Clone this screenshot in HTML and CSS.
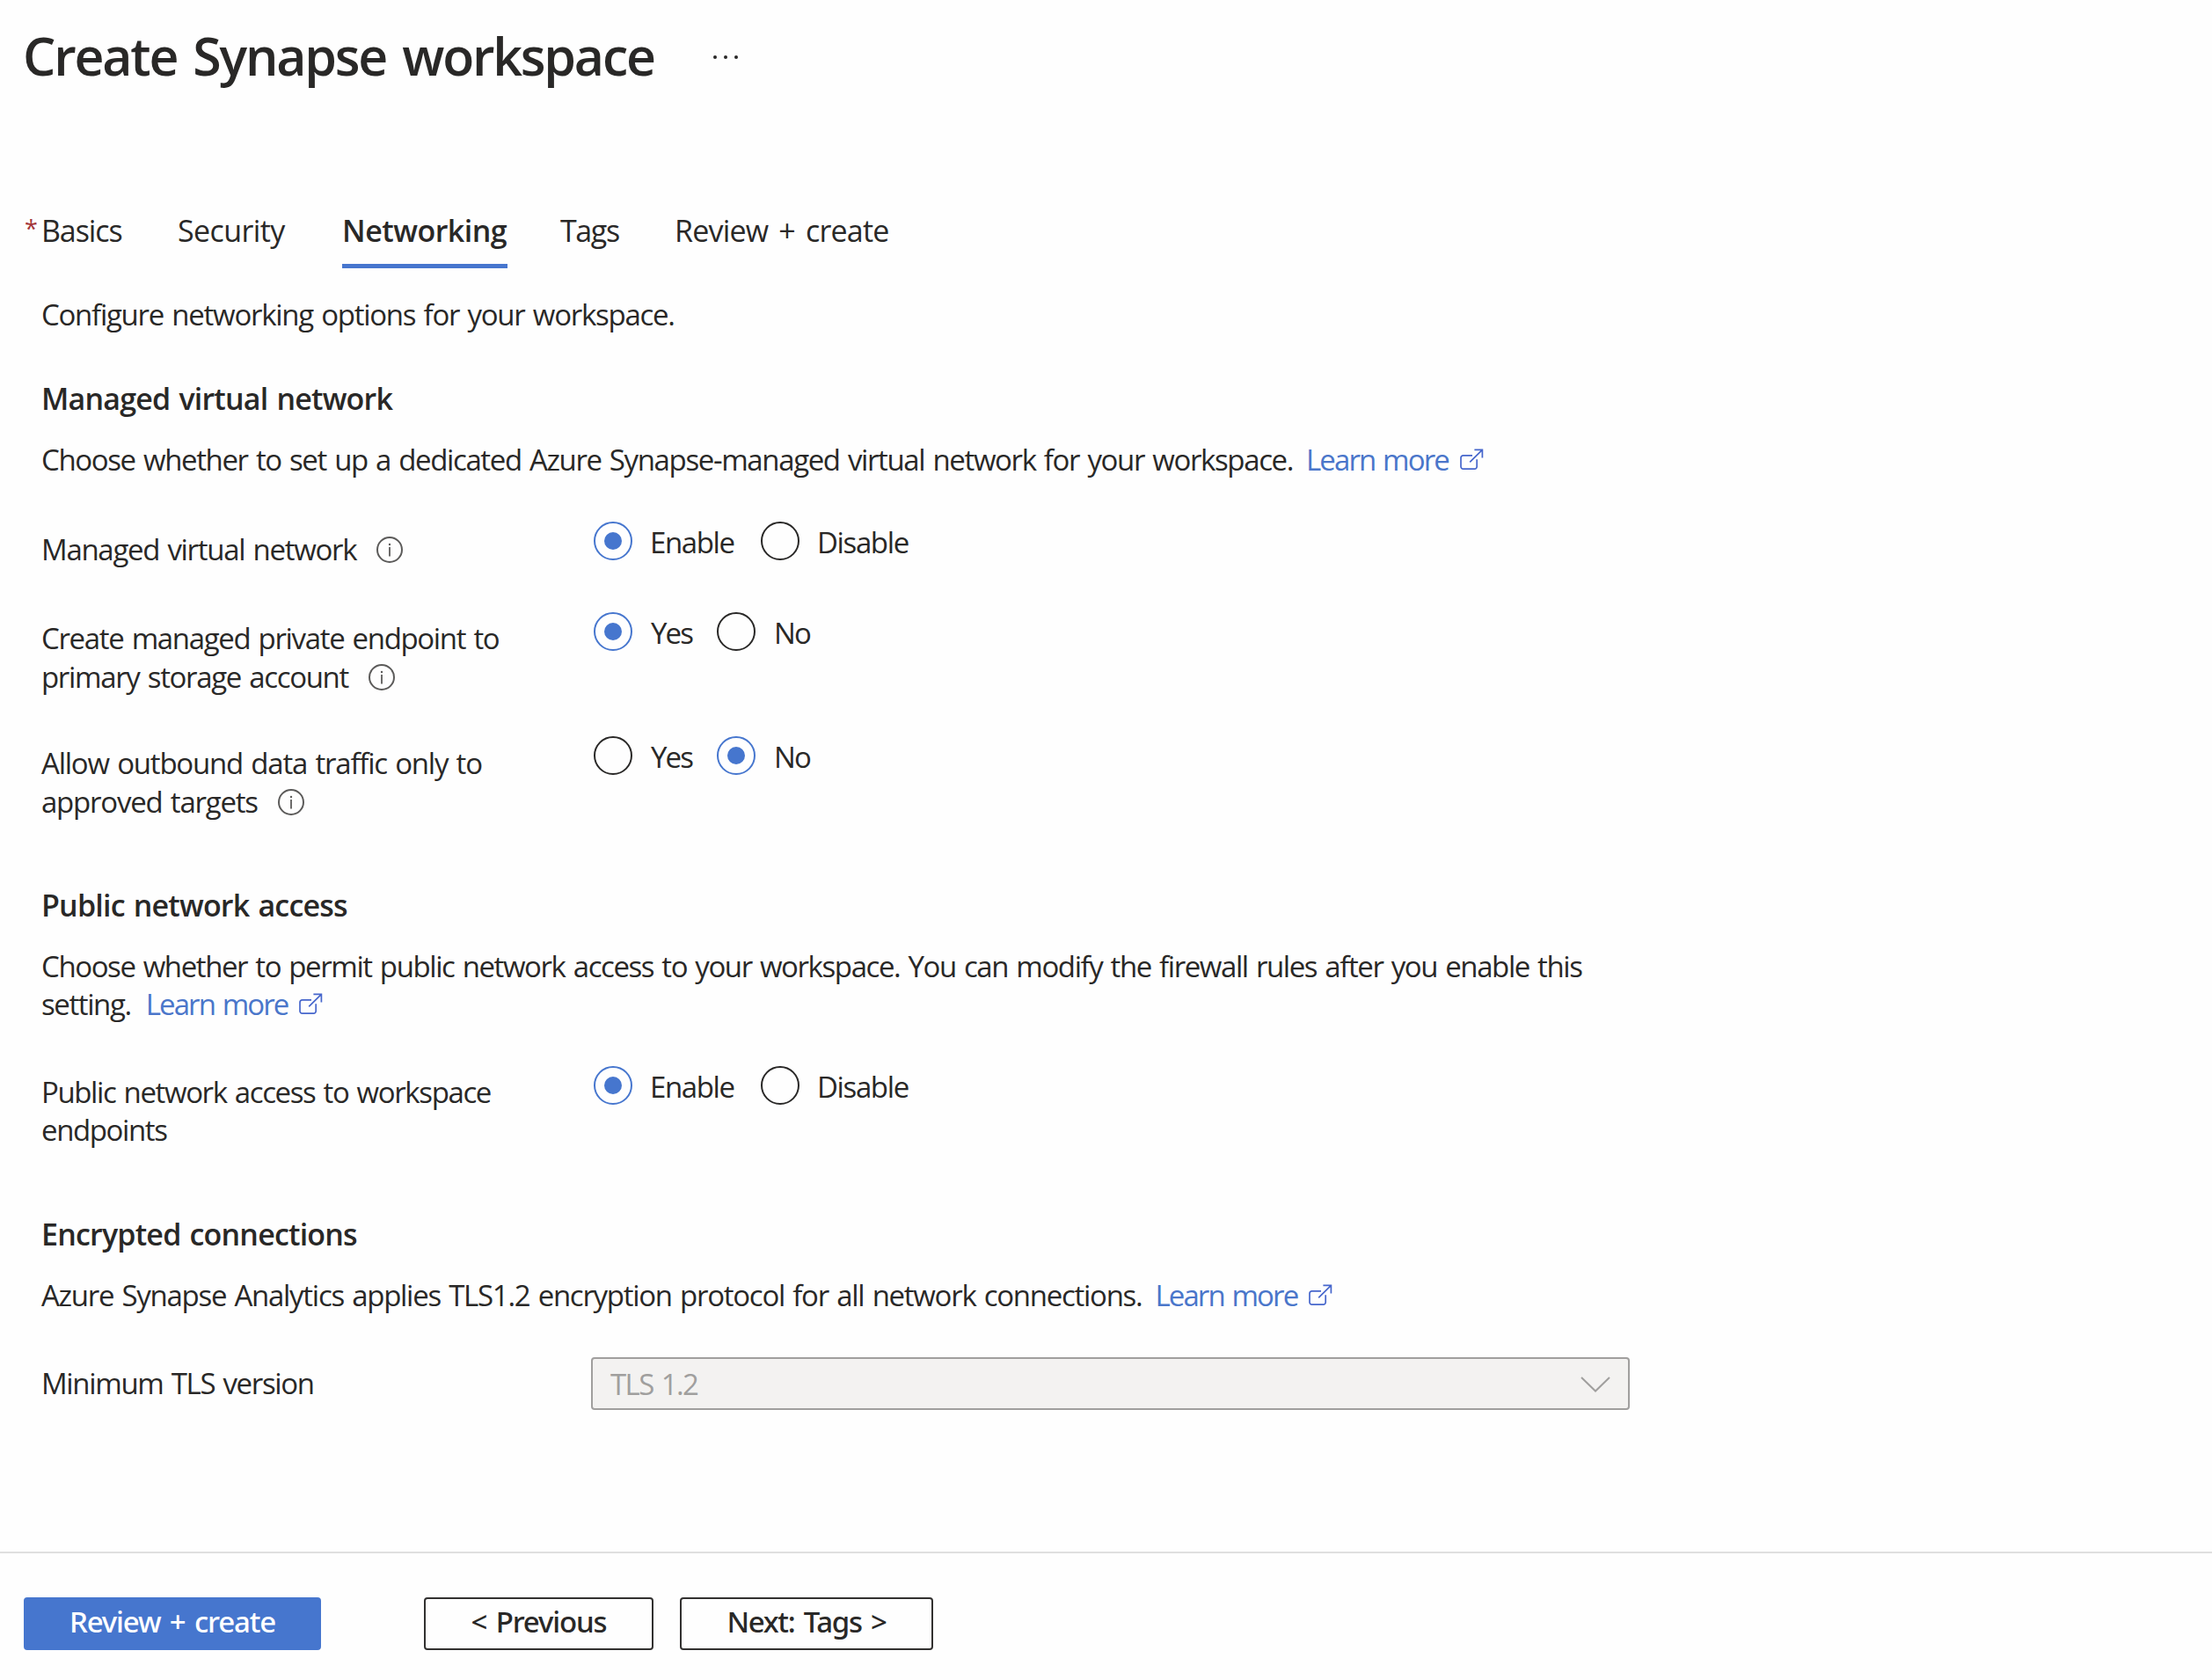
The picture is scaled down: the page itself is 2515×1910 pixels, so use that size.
FILE: index.html
```
<!DOCTYPE html>
<html lang="en">
<head>
<meta charset="utf-8">
<title>Create Synapse workspace</title>
<link rel="stylesheet" href="styles.css">
</head>
<body>
<svg class="defs" aria-hidden="true">
  <symbol id="info" viewBox="0 0 30 30">
    <circle cx="15" cy="15" r="14" fill="none" stroke="currentColor" stroke-width="2"/>
    <path d="M15 12v10.5" fill="none" stroke="currentColor" stroke-width="1.8"/>
    <circle cx="15" cy="9" r="1.2" fill="currentColor"/>
  </symbol>
  <symbol id="external" viewBox="0 0 27 25">
    <path d="M14 7.8H3.6A2.6 2.6 0 0 0 1 10.4V20.6A2.6 2.6 0 0 0 3.6 23.2H16.6A2.6 2.6 0 0 0 19.2 20.6V12.2M11.2 15.4L25.4 1.4M16.4 1.4H25.4V10.4" fill="none" stroke="currentColor" stroke-width="1.7"/>
  </symbol>
</svg>
<main class="page">
  <header class="header">
    <h1 class="title">Create Synapse workspace</h1>
    <span class="more"><i></i><i></i><i></i></span>
  </header>

  <nav class="tabs">
    <a class="tab tab-required"><span class="star">*</span>Basics</a>
    <a class="tab">Security</a>
    <a class="tab tab-active">Networking</a>
    <a class="tab tab-tags">Tags</a>
    <a class="tab tab-review">Review + create</a>
  </nav>

  <div class="content">
    <p class="intro">Configure networking options for your workspace.</p>

    <h2>Managed virtual network</h2>
    <p class="text">Choose whether to set up a dedicated Azure Synapse-managed virtual network for your workspace.<a class="link">Learn more<svg class="external"><use href="#external"/></svg></a></p>
    <div class="row row-vnet">
      <div class="label">Managed virtual network<svg class="info"><use href="#info"/></svg></div>
      <div class="options wide">
        <label class="option"><span class="radio checked"></span><span>Enable</span></label>
        <label class="option"><span class="radio"></span><span>Disable</span></label>
      </div>
    </div>
    <div class="row row-endpoint">
      <div class="label">Create managed private endpoint to<br>primary storage account<svg class="info"><use href="#info"/></svg></div>
      <div class="options yes-no">
        <label class="option"><span class="radio checked"></span><span>Yes</span></label>
        <label class="option"><span class="radio"></span><span>No</span></label>
      </div>
    </div>
    <div class="row row-outbound">
      <div class="label">Allow outbound data traffic only to<br>approved targets<svg class="info"><use href="#info"/></svg></div>
      <div class="options yes-no">
        <label class="option"><span class="radio"></span><span>Yes</span></label>
        <label class="option"><span class="radio checked"></span><span>No</span></label>
      </div>
    </div>

    <h2>Public network access</h2>
    <p class="text text-wrapped">Choose whether to permit public network access to your workspace. You can modify the firewall rules after you enable this<br>setting.<a class="link">Learn more<svg class="external"><use href="#external"/></svg></a></p>
    <div class="row row-public">
      <div class="label">Public network access to workspace<br>endpoints</div>
      <div class="options wide">
        <label class="option"><span class="radio checked"></span><span>Enable</span></label>
        <label class="option"><span class="radio"></span><span>Disable</span></label>
      </div>
    </div>

    <h2>Encrypted connections</h2>
    <p class="text text-tls">Azure Synapse Analytics applies TLS1.2 encryption protocol for all network connections.<a class="link">Learn more<svg class="external"><use href="#external"/></svg></a></p>
    <div class="row row-tls">
      <div class="label">Minimum TLS version</div>
      <div class="select"><span>TLS 1.2</span><svg class="chevron" viewBox="0 0 34 18"><path d="M1 1L17 16.5L33 1" fill="none" stroke="currentColor" stroke-width="2"/></svg></div>
    </div>
  </div>

  <footer class="footer">
    <button class="btn btn-primary">Review + create</button>
    <button class="btn btn-prev">&lt; Previous</button>
    <button class="btn btn-next">Next: Tags &gt;</button>
  </footer>
</main>
</body>
</html>
```
FILE: styles.css
```
* { box-sizing: border-box; }
body {
  margin: 0;
  background: #fefefe;
  color: #292827;
  font: 400 33px/44px "Open Sans", "Noto Sans", sans-serif;
  letter-spacing: -1.37px;
  word-spacing: 2px;
}
h1, h2, p { margin: 0; }
.defs { display: none; }
.page { display: flex; flex-direction: column; height: 1910px; }

.header { display: flex; align-items: center; gap: 67px; padding: 22px 0 0 26px; }
.title { padding-top: 1px; font-size: 59px; font-weight: 600; line-height: 80px; letter-spacing: -2.2px; word-spacing: 5px; }
.more { display: flex; gap: 8px; padding-top: 5px; }
.more i { width: 4px; height: 4px; border-radius: 50%; background: #292827; }

.tabs {
  display: grid;
  grid-template-columns: 174px 187px 248px 130px auto;
  justify-content: start;
  padding-left: 28px;
  margin-top: 137px;
  font-size: 34px;
  letter-spacing: -0.6px;
}
.tab { justify-self: start; padding-bottom: 16px; border-bottom: 5px solid transparent; white-space: nowrap; }
.tab-required { display: flex; gap: 5px; letter-spacing: -1.1px; }
.star { width: 14px; color: #a4373a; font-size: 27px; line-height: 39px; letter-spacing: 0; }
.tab-active { padding-right: 1px; border-color: #4676ce; font-weight: 600; letter-spacing: -0.5px; }
.tab-tags { letter-spacing: -1.4px; }
.tab-review { letter-spacing: -0.8px; word-spacing: 4px; }

.content { flex: 1; padding-left: 47px; white-space: nowrap; }
.intro { margin-top: 31px; letter-spacing: -1.27px; }
h2 { font-size: 34px; font-weight: 600; line-height: 44px; letter-spacing: -0.8px; }
.intro + h2 { margin-top: 51px; }
.text { margin-top: 26px; }
.text-wrapped { line-height: 43px; letter-spacing: -1.41px; }
.text-tls { letter-spacing: -1.28px; }
.link { margin-left: 15px; color: #4a76ca; letter-spacing: -1.9px; }
.text-wrapped .link { margin-left: 17px; }
.external { width: 27px; height: 25px; margin-left: 13px; vertical-align: 0; color: #4666cc; }

.row { display: grid; grid-template-columns: 628px 1fr; align-items: start; }
.row-vnet { margin-top: 48px; height: 103px; }
.row-endpoint { height: 141px; }
.row-outbound { height: 170px; }
.row-public { margin-top: 49px; height: 169px; }
.row-tls { margin-top: 48px; }
.label { padding-top: 8px; letter-spacing: -1.34px; }
.row-vnet .label { padding-top: 10px; letter-spacing: -1.3px; }
.row-outbound .label { padding-top: 9px; letter-spacing: -1.22px; }
.row-public .label { line-height: 43px; letter-spacing: -1.39px; }
.info { width: 30px; height: 30px; margin-left: 23px; vertical-align: -3px; color: #5c5b5a; }

.options { display: grid; grid-template-columns: 140px auto; justify-content: start; }
.options.wide { grid-template-columns: 190px auto; }
.options.yes-no { letter-spacing: -1.9px; }
.option { display: flex; gap: 20px; }
.option span:last-child { padding-top: 2px; }
.options.yes-no .option { gap: 21px; }
.radio { display: flex; align-items: center; justify-content: center; width: 44px; height: 44px; border: 2px solid #292827; border-radius: 50%; }
.radio.checked { border-color: #4676ce; }
.radio.checked::after { content: ""; width: 20px; height: 20px; border-radius: 50%; background: #4676ce; }

.select {
  display: flex;
  align-items: center;
  justify-content: space-between;
  width: 1181px;
  height: 60px;
  margin-left: -3px;
  padding: 0 20px 0 20px;
  border: 2px solid #a09f9e;
  border-radius: 4px;
  background: #f3f2f1;
  color: #a09f9e;
  letter-spacing: -1.6px;
}
.select span { padding-top: 2px; }
.chevron { width: 34px; height: 18px; margin-top: 2px; }

.footer { display: flex; height: 146px; padding: 50px 0 0 27px; border-top: 2px solid #dfdfdf; }
.btn {
  height: 60px;
  padding: 0 0 4px;
  border: 2px solid #323130;
  border-radius: 4px;
  background: #fefefe;
  color: #292827;
  font: 500 33px/44px "Noto Sans", sans-serif;
  letter-spacing: -1.15px;
  word-spacing: 3px;
}
.btn-primary { width: 338px; border-color: #4676ce; background: #4676ce; color: #fff; }
.btn-prev { width: 261px; margin-left: 117px; }
.btn-next { width: 288px; margin-left: 30px; letter-spacing: -1.3px; }
```
